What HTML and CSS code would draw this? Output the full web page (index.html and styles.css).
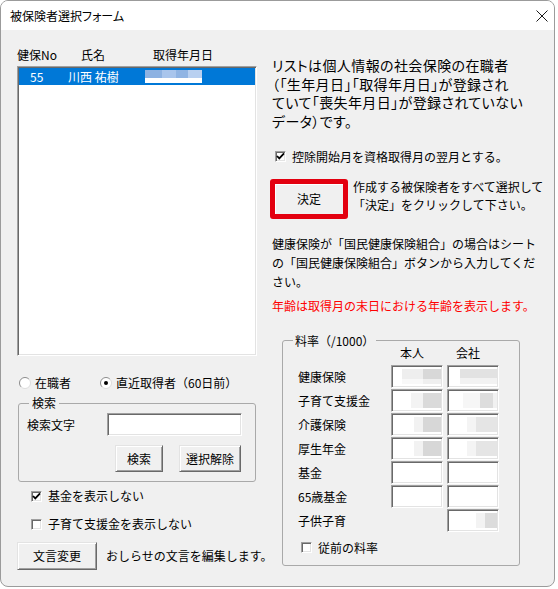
FILE: index.html
```html
<!DOCTYPE html>
<html lang="ja">
<head>
    <meta charset="UTF-8">
    <meta name="viewport" content="width=device-width, initial-scale=1.0">
    <title>被保険者選択フォーム</title>

    <!-- estilo -->
    <link rel="stylesheet" href="styles.css">
</head>
<body>
    <div class="window">
        <!-- barra de titulo -->
        <div class="titlebar">
            <span class="title">被保険者選択フォーム</span>
            <svg class="closeIcon" width="12" height="12" viewBox="0 0 12 12">
                <path d="M0.5 0.5 L11.5 11.5 M11.5 0.5 L0.5 11.5" stroke="#1a1a1a" stroke-width="1" fill="none"/>
            </svg>
        </div>

        <div class="client">
            <!-- columna izquierda: lista y busqueda -->
            <div class="leftCol">
                <div class="listHead">
                    <span class="hNo">健保No</span>
                    <span class="hName">氏名</span>
                    <span>取得年月日</span>
                </div>

                <div class="listBox">
                    <div class="listRow selected">
                        <span class="cNo">55</span>
                        <span class="cName">川西 祐樹</span>
                        <span class="maskedDate"></span>
                    </div>
                </div>

                <div class="radios">
                    <div class="radio">
                        <svg width="12" height="12" viewBox="0 0 12 12">
                            <circle cx="6" cy="6" r="5.5" fill="#fff"/>
                            <path d="M2.1 9.9 A5.5 5.5 0 0 1 9.9 2.1" fill="none" stroke="#8c8c8c"/>
                            <path d="M9.9 2.1 A5.5 5.5 0 0 1 2.1 9.9" fill="none" stroke="#dcdcdc"/>
                        </svg>
                        在職者
                    </div>
                    <div class="radio">
                        <svg width="12" height="12" viewBox="0 0 12 12">
                            <circle cx="6" cy="6" r="5.5" fill="#fff"/>
                            <path d="M2.1 9.9 A5.5 5.5 0 0 1 9.9 2.1" fill="none" stroke="#8c8c8c"/>
                            <path d="M9.9 2.1 A5.5 5.5 0 0 1 2.1 9.9" fill="none" stroke="#dcdcdc"/>
                            <circle cx="6" cy="6" r="2" fill="#000"/>
                        </svg>
                        直近取得者（60日前）
                    </div>
                </div>

                <fieldset class="group searchGroup">
                    <legend>検索</legend>
                    <div class="searchRow">
                        <span class="searchLabel">検索文字</span>
                        <div class="field searchField"></div>
                    </div>
                    <div class="searchBtns">
                        <button class="btn btnSearch">検索</button>
                        <button class="btn btnClear">選択解除</button>
                    </div>
                </fieldset>

                <div class="check kikinCheck">
                    <span class="box">
                        <svg width="9" height="9" viewBox="0 0 9 9"><polyline points="1,4 3.3,6.4 8,1.4" fill="none" stroke="#000" stroke-width="1.8"/></svg>
                    </span>
                    基金を表示しない
                </div>
                <div class="check kosodateCheck">
                    <span class="box"></span>
                    子育て支援金を表示しない
                </div>

                <div class="noticeRow">
                    <button class="btn btnNotice">文言変更</button>
                    <span class="noticeText">おしらせの文言を編集します。</span>
                </div>
            </div>

            <!-- columna derecha: avisos y tasas -->
            <div class="rightCol">
                <p class="intro">
                    リストは個人情報の社会保険の在職者<br>
                    （「生年月日」「取得年月日」が登録され<br>
                    ていて「喪失年月日」が登録されていない<br>
                    データ）です。
                </p>

                <div class="check deductCheck">
                    <span class="box">
                        <svg width="9" height="9" viewBox="0 0 9 9"><polyline points="1,4 3.3,6.4 8,1.4" fill="none" stroke="#000" stroke-width="1.8"/></svg>
                    </span>
                    控除開始月を資格取得月の翌月とする。
                </div>

                <div class="decideRow">
                    <div class="decideFrame">
                        <button class="btn btnDecide">決定</button>
                    </div>
                    <p class="decideNote">
                        作成する被保険者をすべて選択して<br>
                        「決定」をクリックして下さい。
                    </p>
                </div>

                <p class="kokuhoNote">
                    健康保険が「国民健康保険組合」の場合はシート<br>
                    の「国民健康保険組合」ボタンから入力してくだ<br>
                    さい。
                </p>

                <p class="ageNote">年齢は取得月の末日における年齢を表示します。</p>

                <fieldset class="group rateGroup">
                    <legend>料率（/1000）</legend>
                    <div class="rateHead">
                        <span></span>
                        <span>本人</span>
                        <span>会社</span>
                    </div>
                    <div class="rateGrid">
                        <span class="rateLabel">健康保険</span>
                        <div class="field cell"><i class="val v1"></i></div>
                        <div class="field cell"><i class="val v2"></i></div>

                        <span class="rateLabel">子育て支援金</span>
                        <div class="field cell"><i class="val v3"></i></div>
                        <div class="field cell"><i class="val v4"></i></div>

                        <span class="rateLabel">介護保険</span>
                        <div class="field cell"><i class="val v5"></i></div>
                        <div class="field cell"><i class="val v6"></i></div>

                        <span class="rateLabel">厚生年金</span>
                        <div class="field cell"><i class="val v5"></i></div>
                        <div class="field cell"><i class="val v6"></i></div>

                        <span class="rateLabel">基金</span>
                        <div class="field cell"></div>
                        <div class="field cell"></div>

                        <span class="rateLabel">65歳基金</span>
                        <div class="field cell"></div>
                        <div class="field cell"></div>

                        <span class="rateLabel">子供子育</span>
                        <span></span>
                        <div class="field cell"><i class="val v7"></i></div>
                    </div>

                    <div class="check prevCheck">
                        <span class="box"></span>
                        従前の料率
                    </div>
                </fieldset>
            </div>
        </div>
    </div>
</body>
</html>
```

FILE: styles.css
```css
* {
    box-sizing: border-box;
}

body {
    margin: 0;
    background-color: #fff;
    font-family: "Noto Sans CJK JP", sans-serif;
    font-size: 12px;
    line-height: 16px;
    color: #000;
}

p {
    margin: 0;
    white-space: nowrap;
}

.window {
    width: 555px;
    height: 587px;
    border: 1px solid #9b9b9b;
    border-radius: 8px;
    overflow: hidden;
    background-color: #f0f0f0;
    display: flex;
    flex-direction: column;
}

.titlebar {
    flex: none;
    height: 29px;
    background-color: #fff;
    display: flex;
    align-items: center;
    justify-content: space-between;
    padding: 0 6px 0 9px;
}

.title {
    font-feature-settings: "palt";
}

.client {
    flex: 1;
    display: flex;
    padding-left: 16px;
}

/* columna izquierda */
.leftCol {
    flex: none;
    width: 240px;
    display: flex;
    flex-direction: column;
}

.listHead {
    margin-top: 17px;
    display: flex;
}

.hNo {
    width: 64px;
}

.hName {
    width: 72px;
}

.listBox {
    margin-top: 3px;
    height: 290px;
    padding: 1px;
    background-color: #fff;
    border: 1px solid;
    border-color: #a0a0a0 #fff #fff #a0a0a0;
    box-shadow: inset 1px 1px #696969, inset -1px -1px #e3e3e3;
}

.listRow {
    height: 17px;
    line-height: 17px;
    display: flex;
    align-items: center;
}

.selected {
    background-color: #0078d7;
    color: #fff;
}

.cNo {
    width: 49px;
    padding-left: 11px;
}

.cName {
    width: 77px;
}

.maskedDate {
    width: 57px;
    height: 13px;
    background:
        linear-gradient(to bottom, transparent 60%, #fff 60%),
        linear-gradient(to right, #8db2e2 0 30%, #a9c5ec 30% 55%, #90b4e3 55% 75%, #b9d0f0 75%);
    filter: blur(0.4px);
}

.radios {
    margin-top: 19px;
    padding-left: 2px;
    display: flex;
    gap: 29px;
}

.radio {
    display: flex;
    align-items: center;
    gap: 4px;
}

/* marcos de grupo */
.group {
    margin: 0;
    border: 1px solid #a9a9a9;
    border-radius: 3px;
    min-inline-size: 0;
}

.group legend {
    line-height: 16px;
}

.searchGroup {
    margin: 4px 0 0 1px;
    width: 238px;
    padding: 2px 13px 9px 8px;
}

.searchGroup legend {
    margin-left: 2px;
    padding: 0 3px;
}

.searchRow {
    display: flex;
    align-items: center;
}

.searchLabel {
    width: 80px;
}

.field {
    background-color: #fff;
    border: 1px solid;
    border-color: #a0a0a0 #fff #fff #a0a0a0;
    box-shadow: inset 1px 1px #696969, inset -1px -1px #e3e3e3;
}

.searchField {
    width: 135px;
    height: 23px;
}

.searchBtns {
    margin: 9px 1px 0 0;
    display: flex;
    justify-content: flex-end;
    gap: 16px;
}

/* botones clasicos */
.btn {
    font: inherit;
    color: #000;
    padding: 0;
    height: 27px;
    background-color: #f0f0f0;
    border: 1px solid;
    border-color: #e3e3e3 #696969 #696969 #e3e3e3;
    box-shadow: inset 1px 1px #fff, inset -1px -1px #a0a0a0;
}

.btnSearch {
    width: 48px;
}

.btnClear {
    width: 62px;
}

/* casillas */
.check {
    display: flex;
    align-items: center;
    gap: 6px;
    height: 16px;
    white-space: nowrap;
}

.box {
    flex: none;
    width: 11px;
    height: 11px;
    background-color: #fff;
    border: 1px solid;
    border-color: #a0a0a0 #fff #fff #a0a0a0;
    box-shadow: inset 1px 1px #696969, inset -1px -1px #e3e3e3;
    display: flex;
    align-items: center;
    justify-content: center;
}

.box svg {
    display: block;
}

.kikinCheck {
    margin: 6px 0 0 14px;
}

.kosodateCheck {
    margin: 12px 0 0 14px;
}

.noticeRow {
    margin-top: 10px;
    display: flex;
    align-items: center;
    gap: 9px;
}

.noticeText {
    white-space: nowrap;
}

.btnNotice {
    flex: none;
    width: 80px;
    height: 28px;
}

/* columna derecha */
.rightCol {
    margin-left: 13px;
    flex: 1;
    display: flex;
    flex-direction: column;
}

.intro {
    margin-top: 26px;
    padding-left: 2px;
    font-size: 14px;
    line-height: 18.7px;
    letter-spacing: 0.4px;
    font-feature-settings: "palt";
}

.deductCheck {
    margin: 18px 0 0 5px;
}

.decideRow {
    margin-top: 13px;
    display: flex;
}

.decideFrame {
    margin-top: 1px;
    width: 78px;
    height: 40px;
    border: 5px solid #e3000f;
    border-radius: 3px;
    display: flex;
}

.btnDecide {
    flex: 1;
    height: auto;
    border: none;
    box-shadow: inset 1px 1px #fff;
}

.decideNote {
    margin-left: 5px;
    line-height: 18px;
}

.kokuhoNote {
    margin-top: 15px;
    padding-left: 2px;
    line-height: 19px;
}

.ageNote {
    margin-top: 5px;
    padding-left: 2px;
    line-height: 19px;
    color: #f00;
}

.rateGroup {
    margin: 18px 0 0 12px;
    width: 238px;
    padding: 0 0 9px 15px;
}

.rateGroup legend {
    margin-left: -5px;
    padding: 0 2px;
}

.rateHead {
    margin-top: -4px;
    display: grid;
    grid-template-columns: 89px 52px 52px;
    column-gap: 4px;
}

.rateHead span {
    padding-left: 9px;
}

.rateGrid {
    margin-top: 4px;
    display: grid;
    grid-template-columns: 89px 52px 52px;
    grid-auto-rows: 23px;
    column-gap: 4px;
    row-gap: 1px;
}

.rateLabel {
    line-height: 23px;
}

.cell {
    display: flex;
    align-items: center;
    justify-content: flex-end;
    padding-right: 1px;
}

/* valores ocultos */
.val {
    height: 15px;
    filter: blur(0.5px);
}

.v1 {
    width: 39px;
    background:
        linear-gradient(to bottom, transparent 65%, rgba(255,255,255,0.6) 65%),
        linear-gradient(to right, #eeeeee 0 55%, #d8d8d8 55%);
}

.v2 {
    width: 37px;
    background:
        linear-gradient(to bottom, #e2e2e2 0 60%, #f2f2f2 60%);
}

.v3 {
    width: 30px;
    background: linear-gradient(to right, #f3f3f3 0 40%, #dadada 40%);
}

.v4 {
    width: 34px;
    background: linear-gradient(to right, #f6f6f6 0 50%, #dddddd 50% 88%, #f1f1f1 88%);
}

.v5 {
    width: 27px;
    background: linear-gradient(to right, #f2f2f2 0 35%, #d7d7d7 35%);
}

.v6 {
    width: 30px;
    background: linear-gradient(to right, #f4f4f4 0 30%, #e5e5e5 30%);
}

.v7 {
    width: 21px;
    background: linear-gradient(to right, #f3f3f3 0 42%, #dcdcdc 42%);
}

.prevCheck {
    margin: 8px 0 0 3px;
}
```
